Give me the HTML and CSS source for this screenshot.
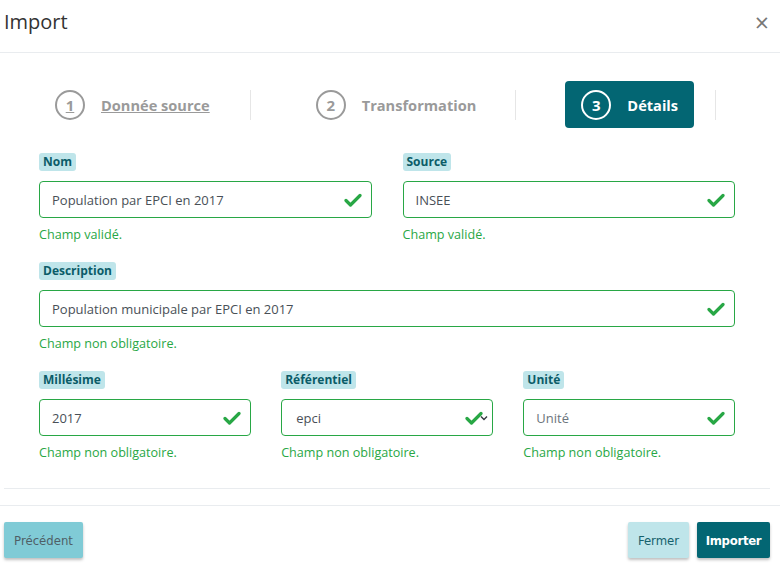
FILE: index.html
```html
<!DOCTYPE html>
<html lang="fr">
<head>
<meta charset="utf-8">
<title>Import</title>
<link rel="stylesheet" href="styles.css">
</head>
<body>
<div class="modal">
  <header class="modal-header">
    <h1 class="modal-title">Import</h1>
    <span class="close">×</span>
  </header>
  <main class="modal-body">
    <nav class="stepper">
      <div class="step done"><span class="num">1</span><span class="lbl">Donnée source</span></div>
      <span class="sep s1"></span>
      <div class="step"><span class="num">2</span><span class="lbl">Transformation</span></div>
      <span class="sep s2"></span>
      <div class="step active"><span class="num">3</span><span class="lbl">Détails</span></div>
      <span class="sep s3"></span>
    </nav>

    <div class="form">
      <div class="row two">
        <div class="field">
          <span class="badge">Nom</span>
          <div class="input"><span class="val">Population par EPCI en 2017</span><svg class="chk" viewBox="0 0 18 14"><path d="M2 7.5 L6.5 12 L16 2.5"/></svg></div>
          <div class="help">Champ validé.</div>
        </div>
        <div class="field">
          <span class="badge">Source</span>
          <div class="input"><span class="val">INSEE</span><svg class="chk" viewBox="0 0 18 14"><path d="M2 7.5 L6.5 12 L16 2.5"/></svg></div>
          <div class="help">Champ validé.</div>
        </div>
      </div>
      <div class="row one">
        <div class="field">
          <span class="badge">Description</span>
          <div class="input"><span class="val">Population municipale par EPCI en 2017</span><svg class="chk" viewBox="0 0 18 14"><path d="M2 7.5 L6.5 12 L16 2.5"/></svg></div>
          <div class="help">Champ non obligatoire.</div>
        </div>
      </div>
      <div class="row three">
        <div class="field">
          <span class="badge">Millésime</span>
          <div class="input"><span class="val">2017</span><svg class="chk" viewBox="0 0 18 14"><path d="M2 7.5 L6.5 12 L16 2.5"/></svg></div>
          <div class="help">Champ non obligatoire.</div>
        </div>
        <div class="field">
          <span class="badge">Référentiel</span>
          <div class="input select"><span class="val">epci</span><svg class="chk sel" viewBox="0 0 18 14"><path d="M2 7.5 L6.5 12 L16 2.5"/></svg><svg class="caret" viewBox="0 0 8 6"><path d="M1 1.5 L4 4.5 L7 1.5"/></svg></div>
          <div class="help">Champ non obligatoire.</div>
        </div>
        <div class="field">
          <span class="badge">Unité</span>
          <div class="input"><span class="val ph">Unité</span><svg class="chk" viewBox="0 0 18 14"><path d="M2 7.5 L6.5 12 L16 2.5"/></svg></div>
          <div class="help">Champ non obligatoire.</div>
        </div>
      </div>
    </div>
    <hr class="body-rule">
  </main>
  <footer class="modal-footer">
    <button class="btn prev">Précédent</button>
    <span class="spacer"></span>
    <button class="btn close-btn">Fermer</button>
    <button class="btn primary">Importer</button>
  </footer>
</div>
</body>
</html>
```

FILE: styles.css
```css
* { box-sizing: border-box; }
html, body { margin: 0; padding: 0; background: #fff; }
body {
  font-family: "Open Sans", "Noto Sans", sans-serif;
  color: #495057;
  width: 780px;
  height: 568px;
  overflow: hidden;
}
.modal { width: 780px; }

.modal-header {
  height: 53px;
  border-bottom: 1px solid #e9ecef;
  display: flex;
  align-items: flex-start;
  justify-content: space-between;
  padding: 7px 11px 0 4px;
}
.modal-title {
  margin: 0;
  font-size: 20px;
  font-weight: 400;
  color: #333;
  line-height: 30px;
}
.close {
  font-size: 25px;
  color: #777;
  line-height: 30px;
  font-weight: 400;
}

.modal-body { padding: 28px 0 0 0; }

.stepper {
  display: flex;
  align-items: center;
  height: 47px;
  padding-left: 39px;
}
.step {
  display: flex;
  align-items: center;
  height: 47px;
  padding: 0 16px;
  border-radius: 4px;
  color: #9a9a9a;
  font-weight: 700;
  font-size: 14.6px;
}
.num {
  width: 30px;
  height: 30px;
  border: 2px solid #9a9a9a;
  border-radius: 50%;
  display: flex;
  align-items: center;
  justify-content: center;
  font-size: 15px;
  margin-right: 16px;
}
.done .num { text-decoration: underline; }
.done .lbl { text-decoration: underline; }
.step.active { background: #036673; color: #fff; }
.step.active .num { border-color: #fff; }
.sep {
  width: 1px;
  height: 30px;
  background: #e6e6e6;
}
.s1 { margin: 0 49px 0 24px; }
.s2 { margin: 0 49px 0 23px; }
.s3 { margin: 0 0 0 21px; }

.form { padding: 25px 45px 0 39px; }
.row { display: grid; column-gap: 31px; }
.row.two { grid-template-columns: 1fr 1fr; margin-bottom: 18px; }
.row.one { grid-template-columns: 1fr; margin-bottom: 18px; }
.row.three { grid-template-columns: 1fr 1fr 1fr; column-gap: 30.5px; }

.field { display: flex; flex-direction: column; align-items: flex-start; }
.badge {
  display: inline-block;
  background: #bfe5ea;
  color: #0b5c68;
  font-weight: 700;
  font-size: 12px;
  line-height: 18px;
  height: 18px;
  padding: 0 4px;
  border-radius: 3px;
  margin-bottom: 10px;
}
.input {
  width: 100%;
  height: 37px;
  border: 1px solid #28a745;
  border-radius: 4px;
  display: flex;
  align-items: center;
  padding: 0 9px 0 12px;
  font-size: 13px;
  color: #495057;
}
.val { flex: 1; white-space: nowrap; }
.val.ph { color: #6c757d; }
.chk {
  width: 18px;
  height: 14px;
  fill: none;
  stroke: #28a745;
  stroke-width: 3.2;
  stroke-linecap: round;
  stroke-linejoin: round;
}
.select .val { padding-left: 2px; }
.caret {
  width: 8px;
  height: 6px;
  fill: none;
  stroke: #343a40;
  stroke-width: 1.4;
  margin-left: -3px;
  margin-right: -5px;
}
.help {
  margin-top: 8px;
  font-size: 12.6px;
  line-height: 18px;
  color: #28a745;
}

.body-rule {
  border: 0;
  border-top: 1px solid #e9ecef;
  margin: 26px 10px 0 4px;
  height: 0;
}

.modal-footer {
  margin-top: 16px;
  border-top: 1px solid #e9ecef;
  display: flex;
  align-items: center;
  padding: 16px 10px 0 4px;
}
.spacer { flex: 1; }
.btn {
  height: 36px;
  border: 0;
  border-radius: 2px;
  font-family: "Liberation Sans Narrow", "DejaVu Sans Condensed", sans-serif;
  font-size: 13px;
  padding: 0;
  box-shadow: 0 2px 3px rgba(0,0,0,0.25);
}
.prev { background: #80cbd6; color: #4f5f66; width: 79px; }
.close-btn { background: #bfe5ea; color: #16616c; width: 61px; margin-right: 8px; }
.primary { background: #036673; color: #fff; font-weight: 700; width: 73px; letter-spacing: -0.3px; }
```
